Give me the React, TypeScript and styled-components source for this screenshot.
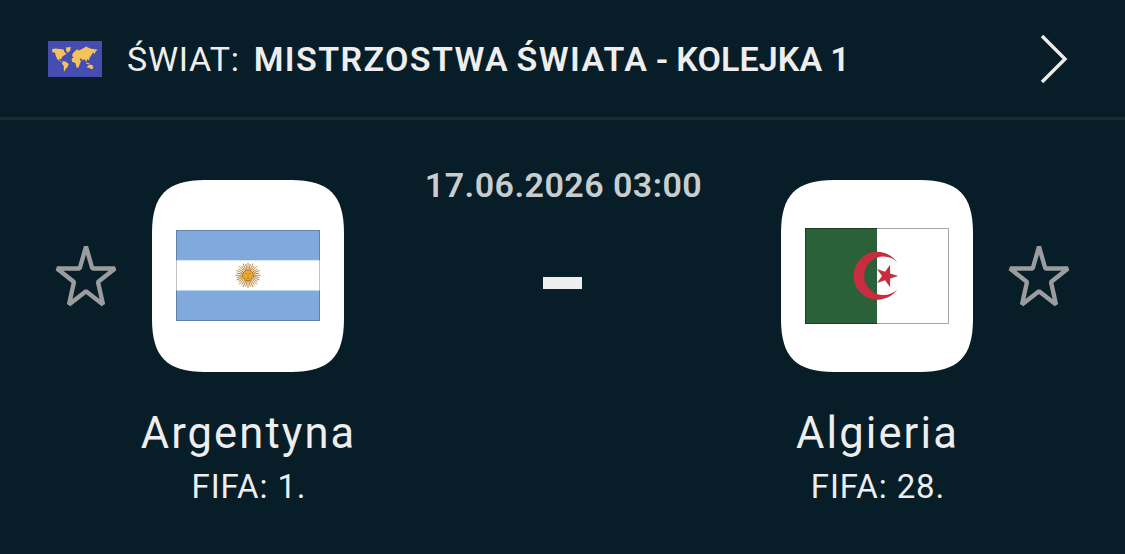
import React from 'react'
import styled, { createGlobalStyle } from 'styled-components'

interface Team {
  name: string
  ranking: string
  flag: JSX.Element
}

const WorldFlag = () => (
  <svg width="54" height="36" viewBox="0 0 54 36">
    <rect width="54" height="36" fill="#454eb0" />
    <g fill="#f4c35c">
      <path d="M4 8.2 7 7.6 12 8 15.5 8.6 16.5 11 18.5 13 15 15 13.5 17 13 18.8 11.5 17.5 11 19 14 20.8 12.5 20.6 9.5 18.4 7.8 15 7 11.4 4.5 11.6Z" />
      <path d="M17.8 6.4 22.8 6 22.2 9.4 19.4 12 18.3 9.4Z" />
      <path d="M14.6 20.2 17.5 20.4 20.8 23 19.6 26 17.6 28 16.8 30.2 15.8 29.4 15.8 25.2 14 22.6Z" />
      <path d="M24.2 13.2 26.6 10.4 29 8.2 31 9.4 34.5 7.8 38 5.6 42 7.4 49.8 8.8 47.6 10.4 46.8 13 45 11.4 43.5 14 41.8 16.6 40.8 19.6 39.4 18 38.2 21 36.6 18 34.8 19.4 33.2 17.6 31.6 18 33 20 31.6 23.4 30.4 26.8 28.6 26.4 27.4 22 24 20.8 23.6 18 25.6 16.2 24.4 15.4Z" />
      <path d="M38 21.4 41.6 22.6 41.2 23.6 38.4 22.8Z" />
      <path d="M39.4 25 42.2 23.4 44.8 24.6 45.2 27.2 43.6 28.2 41 26.8 39.4 27Z" />
    </g>
  </svg>
)

const ArgentinaFlag = () => (
  <svg width="144" height="92" viewBox="0 0 144 92">
    <rect width="144" height="91" fill="#fff" />
    <rect width="144" height="30.3" fill="#80aadc" />
    <rect y="60.5" width="144" height="30.5" fill="#80aadc" />
    <g stroke="#b98238" strokeWidth="0.9">
      {Array.from({ length: 32 }, (_, i) => (
        <line
          key={i}
          x1="72"
          y1="39.5"
          x2="72"
          y2={i % 2 ? 33.8 : 32.6}
          transform={`rotate(${i * 11.25} 72 45.3)`}
        />
      ))}
    </g>
    <circle cx="72" cy="45.3" r="5.4" fill="#eaa934" stroke="#a86d20" />
    <path
      d="M69 43.8h2M73 43.8h2M72 44.3v2M70 48.1h4"
      fill="none"
      stroke="#b67824"
      strokeWidth="0.7"
    />
    <rect
      x="0.5"
      y="0.5"
      width="143"
      height="90"
      fill="none"
      stroke="#000"
      strokeOpacity="0.24"
    />
  </svg>
)

const AlgeriaFlag = () => (
  <svg width="144" height="96" viewBox="0 0 144 96">
    <rect width="144" height="96" fill="#fff" />
    <rect width="72" height="96" fill="#2a6138" />
    <path
      d="M92.4 34.4A24 24 0 1 0 92.4 61.2A19.3 19.3 0 1 1 92.4 34.4Z"
      fill="#c72c3f"
    />
    <path
      d="M93.2 48 85.1 50.6 85.1 59.2 80.1 52.2 72 54.9 77 48 72 41.1 80.1 43.8 85.1 36.8 85.1 45.4Z"
      fill="#c72c3f"
    />
    <rect
      x="0.5"
      y="0.5"
      width="143"
      height="95"
      fill="none"
      stroke="#000"
      strokeOpacity="0.35"
    />
  </svg>
)

const StarIcon = () => (
  <svg width="60" height="62" viewBox="0 0 60 62">
    <path
      d="M30 0.6 36.3 22.5H59L42 36 47 58.6 30 45.2 13 58.6 18 36 1 22.5H23.7Z"
      fill="none"
      stroke="#9a9c9e"
      strokeWidth="4.4"
      strokeLinejoin="bevel"
    />
  </svg>
)

const ChevronIcon = () => (
  <svg width="28" height="50" viewBox="0 0 28 50">
    <path d="M2 2 25 25 2 48" fill="none" stroke="#eee" strokeWidth="3.4" />
  </svg>
)

const home: Team = {
  name: 'Argentyna',
  ranking: 'FIFA: 1.',
  flag: <ArgentinaFlag />,
}

const away: Team = {
  name: 'Algieria',
  ranking: 'FIFA: 28.',
  flag: <AlgeriaFlag />,
}

const Participant = ({ team }: { team: Team }) => (
  <SParticipant>
    <FlagCard>{team.flag}</FlagCard>
    <TeamName>{team.name}</TeamName>
    <Ranking>{team.ranking}</Ranking>
  </SParticipant>
)

const App = () => {
  return (
    <Page>
      <GlobalStyle />
      <Header>
        <WorldFlag />
        <Country>ŚWIAT:</Country>
        <League>
          MISTRZOSTWA ŚWIATA <Round>- KOLEJKA 1</Round>
        </League>
        <OpenButton aria-label="Otwórz">
          <ChevronIcon />
        </OpenButton>
      </Header>
      <Match>
        <FavouriteButton aria-label="Ulubione">
          <StarIcon />
        </FavouriteButton>
        <Participant team={home} />
        <Details>
          <StartTime>17.06.2026 03:00</StartTime>
          <ScoreDash />
        </Details>
        <Participant team={away} />
        <FavouriteButton aria-label="Ulubione">
          <StarIcon />
        </FavouriteButton>
      </Match>
    </Page>
  )
}

const GlobalStyle = createGlobalStyle`
  * {
    box-sizing: border-box;
  }
  body {
    margin: 0;
    background-color: #071d27;
    color: #eee;
    font-family: Roboto, 'Liberation Sans', sans-serif;
  }
  svg {
    display: block;
    flex-shrink: 0;
    overflow: visible;
  }
`

const Page = styled.div`
  width: 1125px;
  height: 554px;
  overflow: hidden;
  background-color: #071d27;
`

const Header = styled.header`
  display: flex;
  align-items: center;
  height: 120px;
  padding: 1px 57px 0 48px;
  border-bottom: 3px solid #192c36;
  white-space: nowrap;
`

const Country = styled.span`
  margin-left: 25px;
  font-size: 34px;
  line-height: 40px;
  letter-spacing: 0.7px;
`

const League = styled.span`
  margin-left: 14px;
  font-size: 34px;
  font-weight: 600;
  line-height: 40px;
  letter-spacing: 1.4px;
  word-spacing: -2.4px;
`

const Round = styled.span`
  letter-spacing: 0.1px;
  word-spacing: -0.5px;
`

const Button = styled.button`
  padding: 0;
  border: 0;
  background: none;
  cursor: pointer;
`

const OpenButton = styled(Button)`
  margin-left: auto;
`

const Match = styled.main`
  display: grid;
  grid-template-columns: 60px 264px 365px 264px 60px;
  align-items: start;
  padding: 0 56px;
`

const FavouriteButton = styled(Button)`
  margin-top: 126px;
`

const SParticipant = styled.section`
  display: flex;
  flex-direction: column;
  align-items: center;
  padding-top: 60px;
`

const FlagCard = styled.div`
  display: flex;
  align-items: center;
  justify-content: center;
  width: 192px;
  height: 192px;
  background-color: #fff;
  clip-path: path(
    'M0 53C0 15 15 0 53 0H139C177 0 192 15 192 53V139C192 177 177 192 139 192H53C15 192 0 177 0 139Z'
  );
`

const TeamName = styled.div`
  margin-top: 36px;
  padding-left: 1px;
  font-size: 43.5px;
  line-height: 52px;
  letter-spacing: 2.1px;
`

const Ranking = styled.div`
  margin-top: 7px;
  padding-left: 2px;
  font-size: 33px;
  line-height: 40px;
  letter-spacing: 0.9px;
`

const Details = styled.section`
  display: flex;
  flex-direction: column;
  align-items: center;
  padding-top: 45px;
`

const StartTime = styled.time`
  padding-left: 2px;
  color: #c8cdd0;
  font-size: 34px;
  font-weight: 600;
  line-height: 40px;
  letter-spacing: 0.45px;
`

const ScoreDash = styled.div`
  width: 39px;
  height: 12px;
  margin-top: 72px;
  background-color: #eee;
`

export default App
